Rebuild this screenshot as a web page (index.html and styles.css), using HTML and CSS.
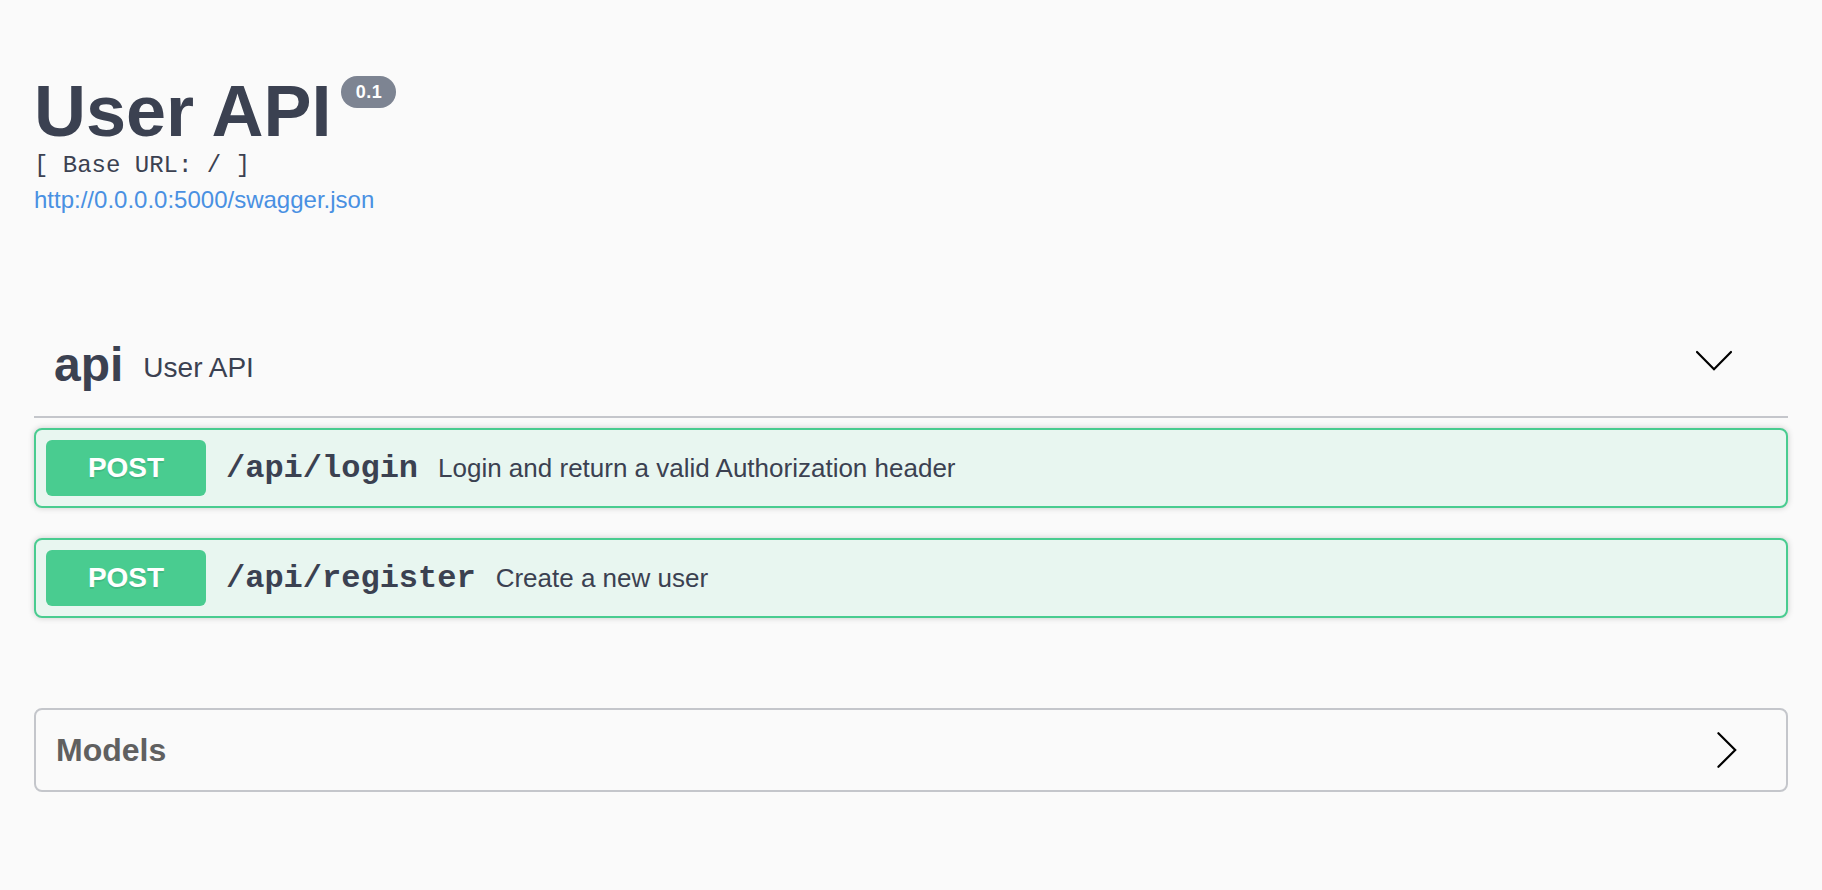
FILE: index.html
```html
<!DOCTYPE html>
<html lang="en">
<head>
<meta charset="utf-8">
<title>User API</title>
<link rel="stylesheet" href="styles.css">
</head>
<body>
<div class="wrapper">
  <section class="info">
    <h2 class="title"><span class="title-text">User API</span><span class="version">0.1</span></h2>
    <pre class="base-url">[ Base URL: / ]</pre>
    <a class="spec-link" href="#">http://0.0.0.0:5000/swagger.json</a>
  </section>

  <section class="tag-section">
    <h4 class="tag">
      <span class="tag-name">api</span>
      <small class="tag-desc">User API</small>
      <button class="expand" type="button" aria-label="collapse">
        <svg class="icon" viewBox="0 0 20 20" width="40" height="40"><polyline points="1.5,3.5 10,12.1 18.5,3.5" fill="none" stroke="#000" stroke-width="1.1" stroke-linecap="round" stroke-linejoin="miter"/></svg>
      </button>
    </h4>

    <div class="opblock">
      <div class="summary">
        <span class="method">POST</span>
        <span class="path">/api/login</span>
        <span class="desc">Login and return a valid Authorization header</span>
      </div>
    </div>

    <div class="opblock">
      <div class="summary">
        <span class="method">POST</span>
        <span class="path">/api/register</span>
        <span class="desc">Create a new user</span>
      </div>
    </div>
  </section>

  <section class="models">
    <h4 class="models-title">
      <span>Models</span>
      <svg class="icon" viewBox="0 0 20 20" width="40" height="40"><polyline points="6.2,1.6 14.6,10 6.2,18.4" fill="none" stroke="#000" stroke-width="1.1" stroke-linecap="round" stroke-linejoin="miter"/></svg>
    </h4>
  </section>
</div>
</body>
</html>
```

FILE: styles.css
```css
* {
  box-sizing: border-box;
}

html, body {
  margin: 0;
  padding: 0;
  background: #fafafa;
}

body {
  font-family: "Liberation Sans", Arial, sans-serif;
  color: #3b4151;
}

.wrapper {
  padding: 0 34px;
}

/* info block */
.info {
  margin: 70px 0 100px;
}

.title {
  display: flex;
  align-items: flex-start;
  margin: 0;
  font-size: 72px;
  line-height: 82px;
  font-weight: 700;
  color: #3b4151;
}

.version {
  display: inline-flex;
  align-items: center;
  justify-content: center;
  width: 55px;
  height: 32px;
  margin: 6px 0 0 10px;
  border-radius: 57px;
  background: #7d8492;
  color: #fff;
  font-size: 18px;
  line-height: 32px;
  letter-spacing: 0.5px;
  font-weight: 700;
}

.base-url {
  margin: 0;
  font-family: "Liberation Mono", "Courier New", monospace;
  font-size: 24px;
  line-height: 28px;
  font-weight: 400;
  color: #3b4151;
}

.spec-link {
  display: block;
  margin-top: 6px;
  font-size: 24px;
  line-height: 28px;
  color: #4990e2;
  text-decoration: none;
}

/* tag header */
.tag {
  display: flex;
  align-items: center;
  margin: 0 0 10px;
  padding: 20px 40px 20px 20px;
  border-bottom: 2px solid #c4c6cb;
  font-size: 48px;
  line-height: 62px;
  font-weight: 700;
  color: #3b4151;
}

.tag-desc {
  flex: 1;
  padding: 6px 20px 0;
  font-size: 28px;
  line-height: 32px;
  font-weight: 400;
  color: #3b4151;
}

.expand {
  display: flex;
  padding: 0;
  margin: 0 14px 0 0;
  border: none;
  background: none;
}

.icon {
  display: block;
  width: 40px;
  height: 40px;
}

/* operation blocks */
.opblock {
  margin: 0 0 30px;
  border: 2px solid #49cc90;
  border-radius: 8px;
  background: #e8f6f0;
  box-shadow: 0 0 6px rgba(0, 0, 0, 0.19);
}

.summary {
  display: flex;
  align-items: center;
  padding: 10px;
}

.method {
  min-width: 160px;
  padding: 12px 30px;
  border-radius: 6px;
  background: #49cc90;
  color: #fff;
  font-size: 28px;
  line-height: 32px;
  font-weight: 700;
  text-align: center;
  text-shadow: 0 2px 0 rgba(0, 0, 0, 0.1);
}

.path {
  padding: 0 20px;
  font-family: "Liberation Mono", "Courier New", monospace;
  font-size: 32px;
  font-weight: 700;
  color: #3b4151;
}

.desc {
  flex: 1;
  font-size: 26px;
  color: #3b4151;
}

/* models */
.models {
  margin: 90px 0 0;
  border: 2px solid #c4c6cb;
  border-radius: 8px;
}

.models-title {
  display: flex;
  align-items: center;
  justify-content: space-between;
  margin: 0;
  padding: 20px 40px 20px 20px;
  font-size: 32px;
  font-weight: 700;
  color: #606060;
}
```
